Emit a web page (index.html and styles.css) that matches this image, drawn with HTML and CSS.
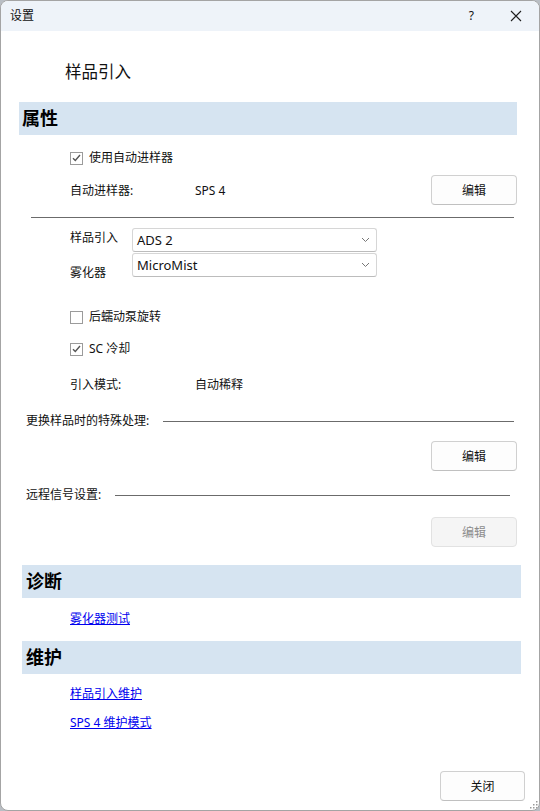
FILE: index.html
```html
<!DOCTYPE html>
<html lang="zh-CN">
<head>
<meta charset="utf-8">
<title>设置</title>
<link rel="stylesheet" href="styles.css">
</head>
<body>
<div class="window">
  <div class="titlebar">
    <span class="title">设置</span>
    <span class="help">?</span>
    <svg class="close" width="12" height="12" viewBox="0 0 12 12"><path d="M1 1 L11 11 M11 1 L1 11" stroke="#1f1f1f" stroke-width="1.1" fill="none"/></svg>
  </div>
  <div class="content">
    <div class="page-title">样品引入</div>

    <div class="section-head sh-first">属性</div>

    <label class="check row-check1"><span class="box checked"><svg width="9" height="8" viewBox="0 0 9 8"><path d="M1 4.2 L3.3 6.5 L8 1" stroke="#555" stroke-width="1.4" fill="none"/></svg></span>使用自动进样器</label>

    <div class="kv-row">
      <span class="kv-label">自动进样器:</span>
      <span class="kv-value">SPS 4</span>
      <button class="btn">编辑</button>
    </div>

    <div class="hr"></div>

    <div class="select-grid">
      <span class="sel-label l1">样品引入</span>
      <div class="select s1"><span>ADS 2</span><svg width="9" height="6" viewBox="0 0 9 6"><path d="M1 1 L4.5 4.5 L8 1" stroke="#777" stroke-width="1" fill="none"/></svg></div>
      <span class="sel-label l2">雾化器</span>
      <div class="select s2"><span>MicroMist</span><svg width="9" height="6" viewBox="0 0 9 6"><path d="M1 1 L4.5 4.5 L8 1" stroke="#777" stroke-width="1" fill="none"/></svg></div>
    </div>

    <label class="check row-check2"><span class="box"></span>后蠕动泵旋转</label>
    <label class="check row-check3"><span class="box checked"><svg width="9" height="8" viewBox="0 0 9 8"><path d="M1 4.2 L3.3 6.5 L8 1" stroke="#555" stroke-width="1.4" fill="none"/></svg></span>SC 冷却</label>

    <div class="kv-row plain">
      <span class="kv-label">引入模式:</span>
      <span class="kv-value">自动稀释</span>
    </div>

    <div class="group-line g1"><span>更换样品时的特殊处理:</span><i></i></div>
    <div class="btn-row b1"><button class="btn">编辑</button></div>

    <div class="group-line g2"><span>远程信号设置:</span><i></i></div>
    <div class="btn-row b2"><button class="btn disabled">编辑</button></div>

    <div class="section-head sh-diag">诊断</div>
    <a class="link lk1" href="#">雾化器测试</a>

    <div class="section-head sh-maint">维护</div>
    <a class="link lk2" href="#">样品引入维护</a>
    <a class="link lk3" href="#">SPS 4 维护模式</a>

    <div class="footer"><button class="btn close-btn">关闭</button></div>
  </div>
  <svg class="grip" width="9" height="9" viewBox="0 0 9 9"><g fill="#9a9a9a"><rect x="7" y="1" width="1.5" height="1.5"/><rect x="4" y="4" width="1.5" height="1.5"/><rect x="7" y="4" width="1.5" height="1.5"/><rect x="1" y="7" width="1.5" height="1.5"/><rect x="4" y="7" width="1.5" height="1.5"/><rect x="7" y="7" width="1.5" height="1.5"/></g></svg>
</div>
</body>
</html>
```
FILE: styles.css
```css
* { box-sizing: border-box; }
html, body { margin: 0; padding: 0; }
body {
  width: 540px;
  height: 811px;
  background: #b9bec4;
  font-family: "Noto Sans", "Noto Sans CJK SC", sans-serif;
  font-size: 12px;
  color: #111;
}
.window {
  position: relative;
  width: 540px;
  height: 811px;
  background: #fff;
  border: 1px solid #a4a4a4;
  border-radius: 8px;
  overflow: hidden;
  display: flex;
  flex-direction: column;
}
.titlebar {
  height: 30px;
  flex: none;
  background: #eef3f9;
  display: flex;
  align-items: center;
  padding-left: 9px;
}
.title { font-size: 12px; line-height: 16px; }
.help { margin-left: auto; font-size: 12px; line-height: 16px; margin-right: 36px; }
.close { margin-right: 17px; }
.content {
  flex: 1;
  display: flex;
  flex-direction: column;
}
.page-title {
  margin-top: 31px;
  padding-left: 64px;
  font-size: 16.5px;
  line-height: 20px;
  height: 20px;
}
.section-head {
  height: 33px;
  line-height: 33px;
  background: #d6e4f1;
  font-size: 18px;
  font-weight: bold;
  color: #000;
}
.sh-first { margin: 20px 22px 0 18px; padding-left: 3px; }
.sh-diag { margin: 18px 18px 0 21px; padding-left: 4px; }
.sh-maint { margin: 12px 18px 0 21px; padding-left: 4px; }

.check {
  display: flex;
  align-items: center;
  height: 20px;
  line-height: 20px;
  padding-left: 69px;
}
.box {
  width: 13px;
  height: 13px;
  border: 1px solid #9b9b9b;
  background: #fff;
  margin-right: 6px;
  display: flex;
  align-items: center;
  justify-content: center;
}
.row-check1 { margin-top: 13px; }
.row-check2 { margin-top: 30px; }
.row-check3 { margin-top: 12px; }

.kv-row {
  margin-top: 7px;
  height: 30px;
  display: flex;
  align-items: center;
  padding-left: 69px;
  padding-right: 22px;
}
.kv-row.plain { margin-top: 15px; height: 20px; }
.kv-label { width: 125px; }
.kv-value { flex: 1; }

.btn {
  font-family: inherit;
  font-size: 12px;
  color: #111;
  width: 86px;
  height: 30px;
  border: 1px solid #d0d0d0;
  border-bottom-color: #c0c0c0;
  border-radius: 4px;
  background: #fdfdfd;
  padding: 0;
}
.btn.disabled { background: #f5f5f5; color: #8c8c8c; border-color: #e2e2e2; }

.hr {
  margin: 12px 25px 0 30px;
  height: 1px;
  background: #6b6b6b;
}

.select-grid {
  margin-top: 10px;
  display: grid;
  grid-template-columns: 62px 245px;
  grid-template-rows: 24px 24px;
  row-gap: 1px;
  padding-left: 69px;
}
.sel-label { line-height: 20px; align-self: start; }
.l1 { grid-row: 1; grid-column: 1; }
.l2 { grid-row: 2; grid-column: 1; margin-top: 10px; }
.select {
  height: 24px;
  border: 1px solid #d6d6d6;
  border-bottom-color: #bcbcbc;
  border-radius: 3px;
  background: #fff;
  display: flex;
  align-items: center;
  justify-content: space-between;
  padding: 0 6px 0 4px;
  font-size: 13px;
}
.s1 { grid-row: 1; grid-column: 2; }
.s2 { grid-row: 2; grid-column: 2; }

.group-line {
  display: flex;
  align-items: center;
  height: 20px;
  line-height: 20px;
  padding-left: 25px;
}
.group-line i {
  flex: 1;
  height: 1px;
  background: #6b6b6b;
  margin-left: 14px;
}
.g1 { margin-top: 17px; padding-right: 25px; }
.g2 { margin-top: 14px; padding-right: 29px; }

.btn-row { display: flex; justify-content: flex-end; padding-right: 22px; }
.b1 { margin-top: 10px; }
.b2 { margin-top: 12px; }

.link {
  align-self: flex-start;
  margin-left: 69px;
  line-height: 20px;
  height: 20px;
  color: #0000ee;
  text-decoration: underline;
}
.lk1 { margin-top: 11px; }
.lk2 { margin-top: 10px; }
.lk3 { margin-top: 9px; }

.footer {
  margin-top: 38px;
  display: flex;
  justify-content: flex-end;
  padding-right: 14px;
}
.close-btn { width: 85px; }

.grip { position: absolute; right: 1px; bottom: 1px; }
```
